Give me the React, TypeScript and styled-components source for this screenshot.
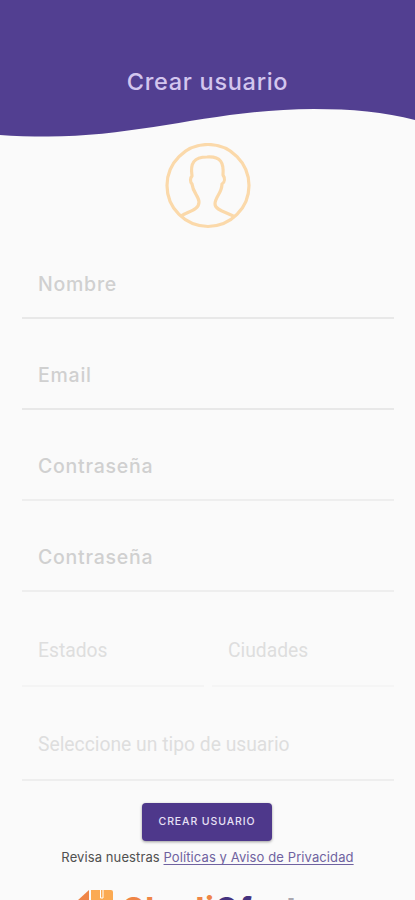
import React from 'react';
import styled, { createGlobalStyle } from 'styled-components';

const Global = createGlobalStyle`
  * { box-sizing: border-box; }
  body { margin: 0; background: #fafafa; overflow: hidden; }
`;

const Screen = styled.main`
  width: 415px;
  height: 900px;
  overflow: hidden;
  display: flex;
  flex-direction: column;
  background: #fafafa;
  font-family: Inter, sans-serif;
`;

const Header = styled.header`
  flex: none;
  height: 143px;
  display: grid;
  & > * { grid-area: 1 / 1; }
`;

const Title = styled.h1`
  margin: 68px 0 0;
  z-index: 1;
  text-align: center;
  font-size: 23.5px;
  line-height: 28px;
  font-weight: 500;
  letter-spacing: 0.7px;
  color: #d3c6ee;
`;

const Avatar = styled.svg`
  flex: none;
  display: block;
  margin: 0 auto;
`;

const Form = styled.form`
  flex: none;
  display: flex;
  flex-direction: column;
  padding: 0 21px 0 22px;
  margin-top: 21px;
`;

const Field = styled.label<{ $h: number; $line: string; $pad: number }>`
  flex: none;
  height: ${p => p.$h}px;
  display: flex;
  align-items: flex-end;
  padding: 0 16px ${p => p.$pad}px;
  border-bottom: 2px solid ${p => p.$line};
`;

const Placeholder = styled.span<{ $roboto?: boolean }>`
  font-family: ${p => (p.$roboto ? 'Roboto' : 'Inter')}, sans-serif;
  font-size: ${p => (p.$roboto ? 19.3 : 19.5)}px;
  font-weight: ${p => (p.$roboto ? 400 : 500)};
  line-height: 24px;
  letter-spacing: ${p => (p.$roboto ? 0 : 0.75)}px;
  color: ${p => (p.$roboto ? '#dedede' : '#d0d0d0')};
  white-space: nowrap;
`;

const Pair = styled.div`
  display: grid;
  grid-template-columns: 182px 182px;
  gap: 8px;
`;

const Submit = styled.button`
  flex: none;
  align-self: center;
  margin: 22px 1px 0 0;
  width: 130px;
  height: 38px;
  padding: 0;
  border: 0;
  border-radius: 4px;
  background: #4e388b;
  box-shadow: 0 1px 3px rgba(0, 0, 0, 0.38);
  color: #e8e0f6;
  font: 500 10.5px/16px Inter, sans-serif;
  letter-spacing: 0.9px;
`;

const Legal = styled.p`
  flex: none;
  margin: 7px 0 0;
  text-align: center;
  font-size: 13px;
  line-height: 18px;
  letter-spacing: 0.1px;
  color: #505050;
  white-space: nowrap;
`;

const LegalLink = styled.a`
  color: #6f62a0;
  text-decoration: underline;
  text-underline-offset: 2px;
  text-decoration-skip-ink: none;
`;

const Brand = styled.div`
  flex: none;
  display: flex;
  align-items: flex-start;
  margin: 24px 0 0 77px;
  height: 40px;
`;

const BrandName = styled.span`
  margin: 0 0 0 9px;
  font: 800 30px/36px Inter, sans-serif;
  letter-spacing: 1.2px;
  color: #ef8546;
  white-space: nowrap;
`;

const BrandTail = styled.span`
  color: #44327f;
`;

const BrandEnd = styled.span`
  color: #aaa8b0;
`;

export default function App() {
  return (
    <Screen>
      <Global />
      <Header>
        <svg width="415" height="143" viewBox="0 0 415 143">
          <path d="M0 0H415V120C385 112 351 109 314 109C216 109 143 136.500 48 136.500C30 136.500 14 136 0 135Z" fill="#523f91" />
        </svg>
        <Title>Crear usuario</Title>
      </Header>
      <Avatar width="86" height="86" viewBox="0 0 86 86" fill="none" stroke="#fbd9aa" strokeWidth="3.2">
        <circle cx="43" cy="42.500" r="41" />
        <path d="M16 73C24 68 34 67 34 59C34 53 28 50 27 41C25 39 25 35 27 33C25 20 29 14 42 14C56 13 59 20 58 32C60 35 60 39 57 41C57 50 50 54 50 61C50 67 61 69 70 74" strokeLinejoin="round" />
      </Avatar>
      <Form>
        <Field $h={69} $pad={21} $line="#e8e8e8"><Placeholder>Nombre</Placeholder></Field>
        <Field $h={91} $pad={21} $line="#e8e8e8"><Placeholder>Email</Placeholder></Field>
        <Field $h={91} $pad={21} $line="#eeeeee"><Placeholder>Contraseña</Placeholder></Field>
        <Field $h={91} $pad={21} $line="#eeeeee"><Placeholder>Contraseña</Placeholder></Field>
        <Pair>
          <Field $h={95} $pad={22} $line="#f4f4f4"><Placeholder $roboto>Estados</Placeholder></Field>
          <Field $h={95} $pad={22} $line="#f5f5f5"><Placeholder $roboto>Ciudades</Placeholder></Field>
        </Pair>
        <Field $h={94} $pad={22} $line="#eeeeee"><Placeholder $roboto>Seleccione un tipo de usuario</Placeholder></Field>
      </Form>
      <Submit type="button">CREAR USUARIO</Submit>
      <Legal>Revisa nuestras <LegalLink>Políticas y Aviso de Privacidad</LegalLink></Legal>
      <Brand>
        <svg width="36" height="34" viewBox="0 0 36 34">
          <path d="M0 11L12 0V34H0Z" fill="#ef8546" />
          <path d="M14 0H34Q36 0 36 2V34H14Z" fill="#fbaa52" />
          <path d="M23.500 0V8H26V0" stroke="#fff" strokeWidth="1" fill="none" />
        </svg>
        <BrandName>Chedi<BrandTail>Ofer</BrandTail><BrandEnd>ta</BrandEnd></BrandName>
      </Brand>
    </Screen>
  );
}
